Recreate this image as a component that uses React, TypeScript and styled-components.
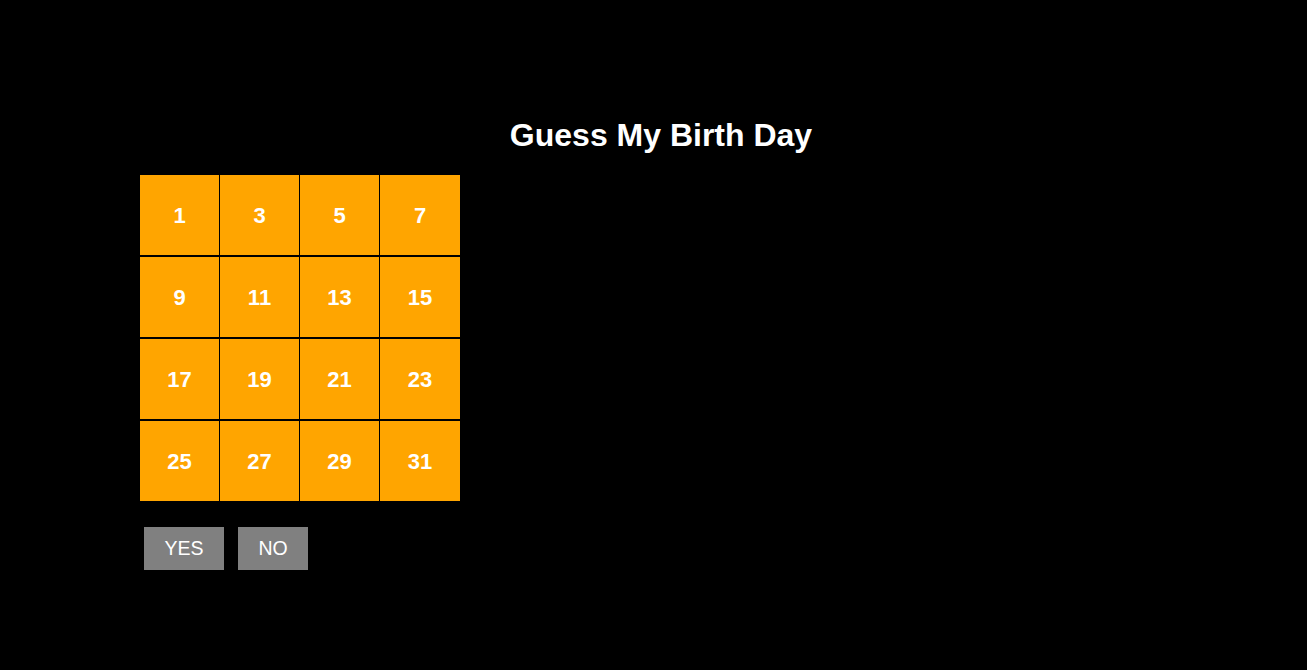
import React from "react";
import styled, { createGlobalStyle } from "styled-components";

const Global = createGlobalStyle`
  html, body {
    margin: 0;
    padding: 0;
    background: #000;
    font-family: "Liberation Sans", Arial, sans-serif;
  }
`;

const Page = styled.div`
  width: 1307px;
  height: 670px;
  background: #000;
  padding-top: 117px;
  box-sizing: border-box;
`;

const Title = styled.h1`
  margin: 0;
  padding-left: 15px;
  text-align: center;
  color: #fff;
  font-size: 32px;
  font-weight: bold;
  line-height: 37px;
`;

const Content = styled.div`
  margin-top: 21px;
  padding-left: 140px;
`;

const Board = styled.div`
  display: grid;
  grid-template-columns: 79px 79px 79px 80px;
  grid-auto-rows: 80px;
  column-gap: 1px;
  row-gap: 2px;
  width: 320px;
  background: #000;
`;

const Cell = styled.div`
  background: #ffa500;
  color: #fff;
  font-size: 22px;
  font-weight: bold;
  display: flex;
  align-items: center;
  justify-content: center;
  padding-top: 1px;
  box-sizing: border-box;
`;

const Actions = styled.div`
  display: flex;
  gap: 14px;
  margin-top: 26px;
  margin-left: 4px;
`;

const Button = styled.button<{ $w: number }>`
  width: ${(p) => p.$w}px;
  height: 43px;
  border: none;
  background: #808080;
  color: #fff;
  font-family: "Liberation Sans", Arial, sans-serif;
  font-size: 19.5px;
  padding: 0;
  cursor: pointer;
`;

const numbers = [1, 3, 5, 7, 9, 11, 13, 15, 17, 19, 21, 23, 25, 27, 29, 31];

export default function App() {
  return (
    <Page>
      <Global />
      <Title>Guess My Birth Day</Title>
      <Content>
        <Board>
          {numbers.map((n) => (
            <Cell key={n}>{n}</Cell>
          ))}
        </Board>
        <Actions>
          <Button $w={80}>YES</Button>
          <Button $w={70}>NO</Button>
        </Actions>
      </Content>
    </Page>
  );
}
